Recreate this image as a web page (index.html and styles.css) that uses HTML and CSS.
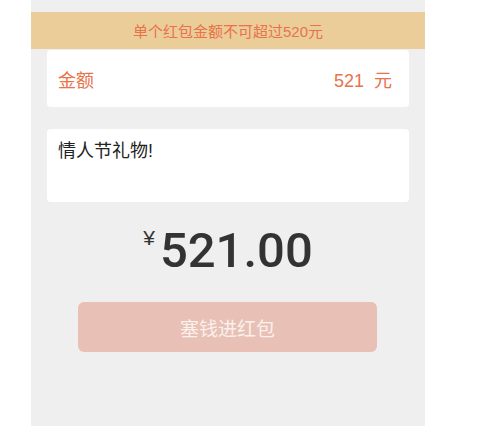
FILE: index.html
```html
<!DOCTYPE html>
<html lang="zh-CN">
<head>
<meta charset="utf-8">
<title>发红包</title>
<link rel="stylesheet" href="styles.css">
</head>
<body>
<div class="panel">
  <div class="notice">单个红包金额不可超过520元</div>
  <div class="card amount-row">
    <span class="label">金额</span>
    <span class="value"><span class="num">521</span><span class="unit">元</span></span>
  </div>
  <div class="card message">情人节礼物!</div>
  <div class="total"><span class="yen">¥</span><span class="big">521.00</span></div>
  <button class="submit" type="button">塞钱进红包</button>
</div>
</body>
</html>
```
FILE: styles.css
```css
html, body {
  margin: 0;
  padding: 0;
  background: #ffffff;
}
body {
  font-family: "Liberation Sans", "Noto Sans CJK SC", sans-serif;
}
.panel {
  margin-left: 31px;
  width: 394px;
  height: 426px;
  background: #efefef;
  padding-top: 12px;
  box-sizing: border-box;
  display: flex;
  flex-direction: column;
}
.notice {
  height: 37px;
  background: #ebcd99;
  color: #e8734a;
  font-size: 15px;
  display: flex;
  align-items: center;
  justify-content: center;
}
.card {
  background: #ffffff;
  border-radius: 4px;
  margin: 0 16px;
  box-sizing: border-box;
}
.amount-row {
  margin-top: 1px;
  height: 57px;
  padding: 0 17px 0 11px;
  display: flex;
  align-items: center;
  justify-content: space-between;
  color: #e8734a;
  font-size: 18px;
}
.value {
  display: flex;
  align-items: baseline;
  gap: 10px;
}
.message {
  margin-top: 22px;
  height: 73px;
  padding: 11px 11px;
  font-size: 18px;
  color: #222222;
  line-height: 22px;
}
.total {
  margin-top: 24px;
  display: flex;
  justify-content: center;
  align-items: flex-start;
  color: #333333;
}
.yen {
  font-size: 21px;
  line-height: 1;
  margin-top: 1px;
  margin-right: 5px;
}
.big {
  font-family: Roboto, "Liberation Sans", sans-serif;
  font-weight: 500;
  font-size: 49px;
  line-height: 50px;
}
.submit {
  margin: 26px 48px 0 47px;
  height: 50px;
  border: none;
  border-radius: 6px;
  background: #e8c0b5;
  color: #fbf0ec;
  font-family: "Liberation Sans", "Noto Sans CJK SC", sans-serif;
  font-size: 19px;
  padding: 0;
}
```
